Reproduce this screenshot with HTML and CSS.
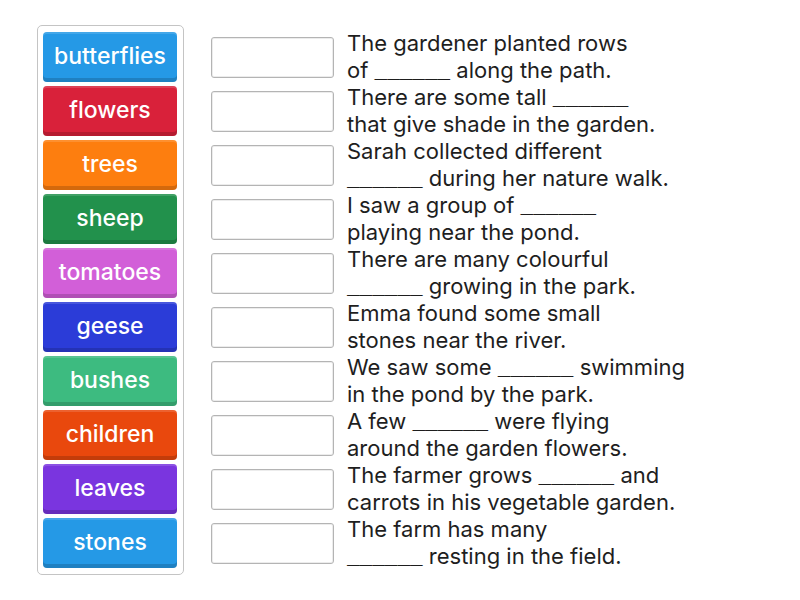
FILE: index.html
```html
<!DOCTYPE html>
<html lang="en">
<head>
<meta charset="utf-8">
<title>Match up</title>
<link rel="stylesheet" href="styles.css">
</head>
<body>
<div class="page">
  <div class="bank">
    <div class="tile c-blue">butterflies</div>
    <div class="tile c-red">flowers</div>
    <div class="tile c-orange">trees</div>
    <div class="tile c-green">sheep</div>
    <div class="tile c-pink">tomatoes</div>
    <div class="tile c-indigo">geese</div>
    <div class="tile c-mint">bushes</div>
    <div class="tile c-rust">children</div>
    <div class="tile c-purple">leaves</div>
    <div class="tile c-blue">stones</div>
  </div>
  <div class="questions">
    <div class="row"><div class="slot"></div><div class="text">The gardener planted rows<br>of <span class="blank">______</span> along the path.</div></div>
    <div class="row"><div class="slot"></div><div class="text">There are some tall <span class="blank">______</span><br>that give shade in the garden.</div></div>
    <div class="row"><div class="slot"></div><div class="text">Sarah collected different<br><span class="blank">______</span> during her nature walk.</div></div>
    <div class="row"><div class="slot"></div><div class="text">I saw a group of <span class="blank">______</span><br>playing near the pond.</div></div>
    <div class="row"><div class="slot"></div><div class="text">There are many colourful<br><span class="blank">______</span> growing in the park.</div></div>
    <div class="row"><div class="slot"></div><div class="text">Emma found some small<br>stones near the river.</div></div>
    <div class="row"><div class="slot"></div><div class="text">We saw some <span class="blank">______</span> swimming<br>in the pond by the park.</div></div>
    <div class="row"><div class="slot"></div><div class="text">A few <span class="blank">______</span> were flying<br>around the garden flowers.</div></div>
    <div class="row"><div class="slot"></div><div class="text">The farmer grows <span class="blank">______</span> and<br>carrots in his vegetable garden.</div></div>
    <div class="row"><div class="slot"></div><div class="text">The farm has many<br><span class="blank">______</span> resting in the field.</div></div>
  </div>
</div>
</body>
</html>
```

FILE: styles.css
```css
html, body {
  margin: 0;
  padding: 0;
  background: #ffffff;
}

body {
  font-family: Inter, "Open Sans", "Liberation Sans", sans-serif;
}

.page {
  display: flex;
  align-items: flex-start;
  padding: 25px 0 0 37px;
  gap: 27px;
}

.bank {
  width: 134px;
  border: 1px solid #c4c4c4;
  border-radius: 5px;
  padding: 6px 6px 6px 5px;
  display: flex;
  flex-direction: column;
  gap: 4px;
}

.tile {
  height: 50px;
  border-radius: 4px;
  display: flex;
  align-items: center;
  justify-content: center;
  color: #ffffff;
  font-size: 23px;
  font-weight: 500;
  box-shadow: inset 0 -4px 0 rgba(0, 0, 0, 0.16), inset 0 2px 0 rgba(255, 255, 255, 0.14);
  padding-bottom: 3px;
  box-sizing: border-box;
}

.c-blue { background: #2599e6; }
.c-red { background: #d9213a; }
.c-orange { background: #fd7e0f; }
.c-green { background: #22914c; }
.c-pink { background: #d25fd8; }
.c-indigo { background: #2b3cd8; }
.c-mint { background: #3dbb80; }
.c-rust { background: #e9480d; }
.c-purple { background: #7a35df; }

.questions {
  padding-top: 5px;
  display: flex;
  flex-direction: column;
}

.row {
  height: 54px;
  display: flex;
  align-items: center;
  gap: 13px;
}

.slot {
  width: 121px;
  height: 39px;
  border: 1px solid #b4b4b4;
  border-radius: 3px;
  background: #ffffff;
  box-shadow: inset 0 0 0 1px #ececec;
  flex: none;
}

.text {
  font-size: 22px;
  line-height: 27px;
  color: #1e1e1e;
  white-space: nowrap;
}

.blank {
  font-family: "Liberation Mono", "DejaVu Sans Mono", monospace;
  font-size: 21px;
  line-height: 0;
}
```
